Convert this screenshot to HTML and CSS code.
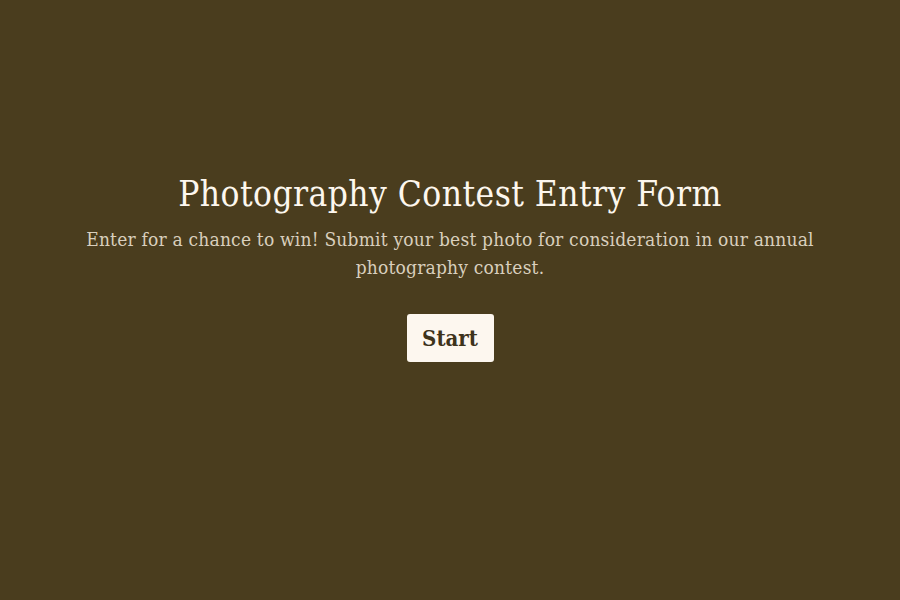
FILE: index.html
```html
<!DOCTYPE html>
<html lang="en">
<head>
<meta charset="utf-8">
<title>Photography Contest Entry Form</title>
<link rel="stylesheet" href="styles.css">
</head>
<body>
<main class="welcome">
  <h1 class="welcome-title">Photography Contest Entry Form</h1>
  <p class="welcome-desc">Enter for a chance to win! Submit your best photo for consideration in our annual photography contest.</p>
  <button class="start-btn" type="button">Start</button>
</main>
</body>
</html>
```
FILE: styles.css
```css
html, body {
  margin: 0;
  padding: 0;
  height: 100%;
}
body {
  background: #4a3d1e;
  font-family: "DejaVu Serif Condensed", "DejaVu Serif", serif;
}
.welcome {
  display: flex;
  flex-direction: column;
  align-items: center;
  padding: 171px 60px 0;
  text-align: center;
}
.welcome-title {
  margin: 0;
  font-size: 35px;
  font-weight: normal;
  line-height: 46px;
  letter-spacing: 0.45px;
  color: #fdf7ee;
}
.welcome-desc {
  margin: 8px 0 0;
  max-width: 780px;
  font-size: 19px;
  line-height: 28px;
  letter-spacing: 0.2px;
  color: #d9cfbd;
}
.start-btn {
  margin-top: 33px;
  width: 87px;
  height: 48px;
  border: none;
  border-radius: 3px;
  background: #fdf7ef;
  color: #3e331b;
  font-family: inherit;
  font-size: 22px;
  font-weight: bold;
  cursor: pointer;
}
```
